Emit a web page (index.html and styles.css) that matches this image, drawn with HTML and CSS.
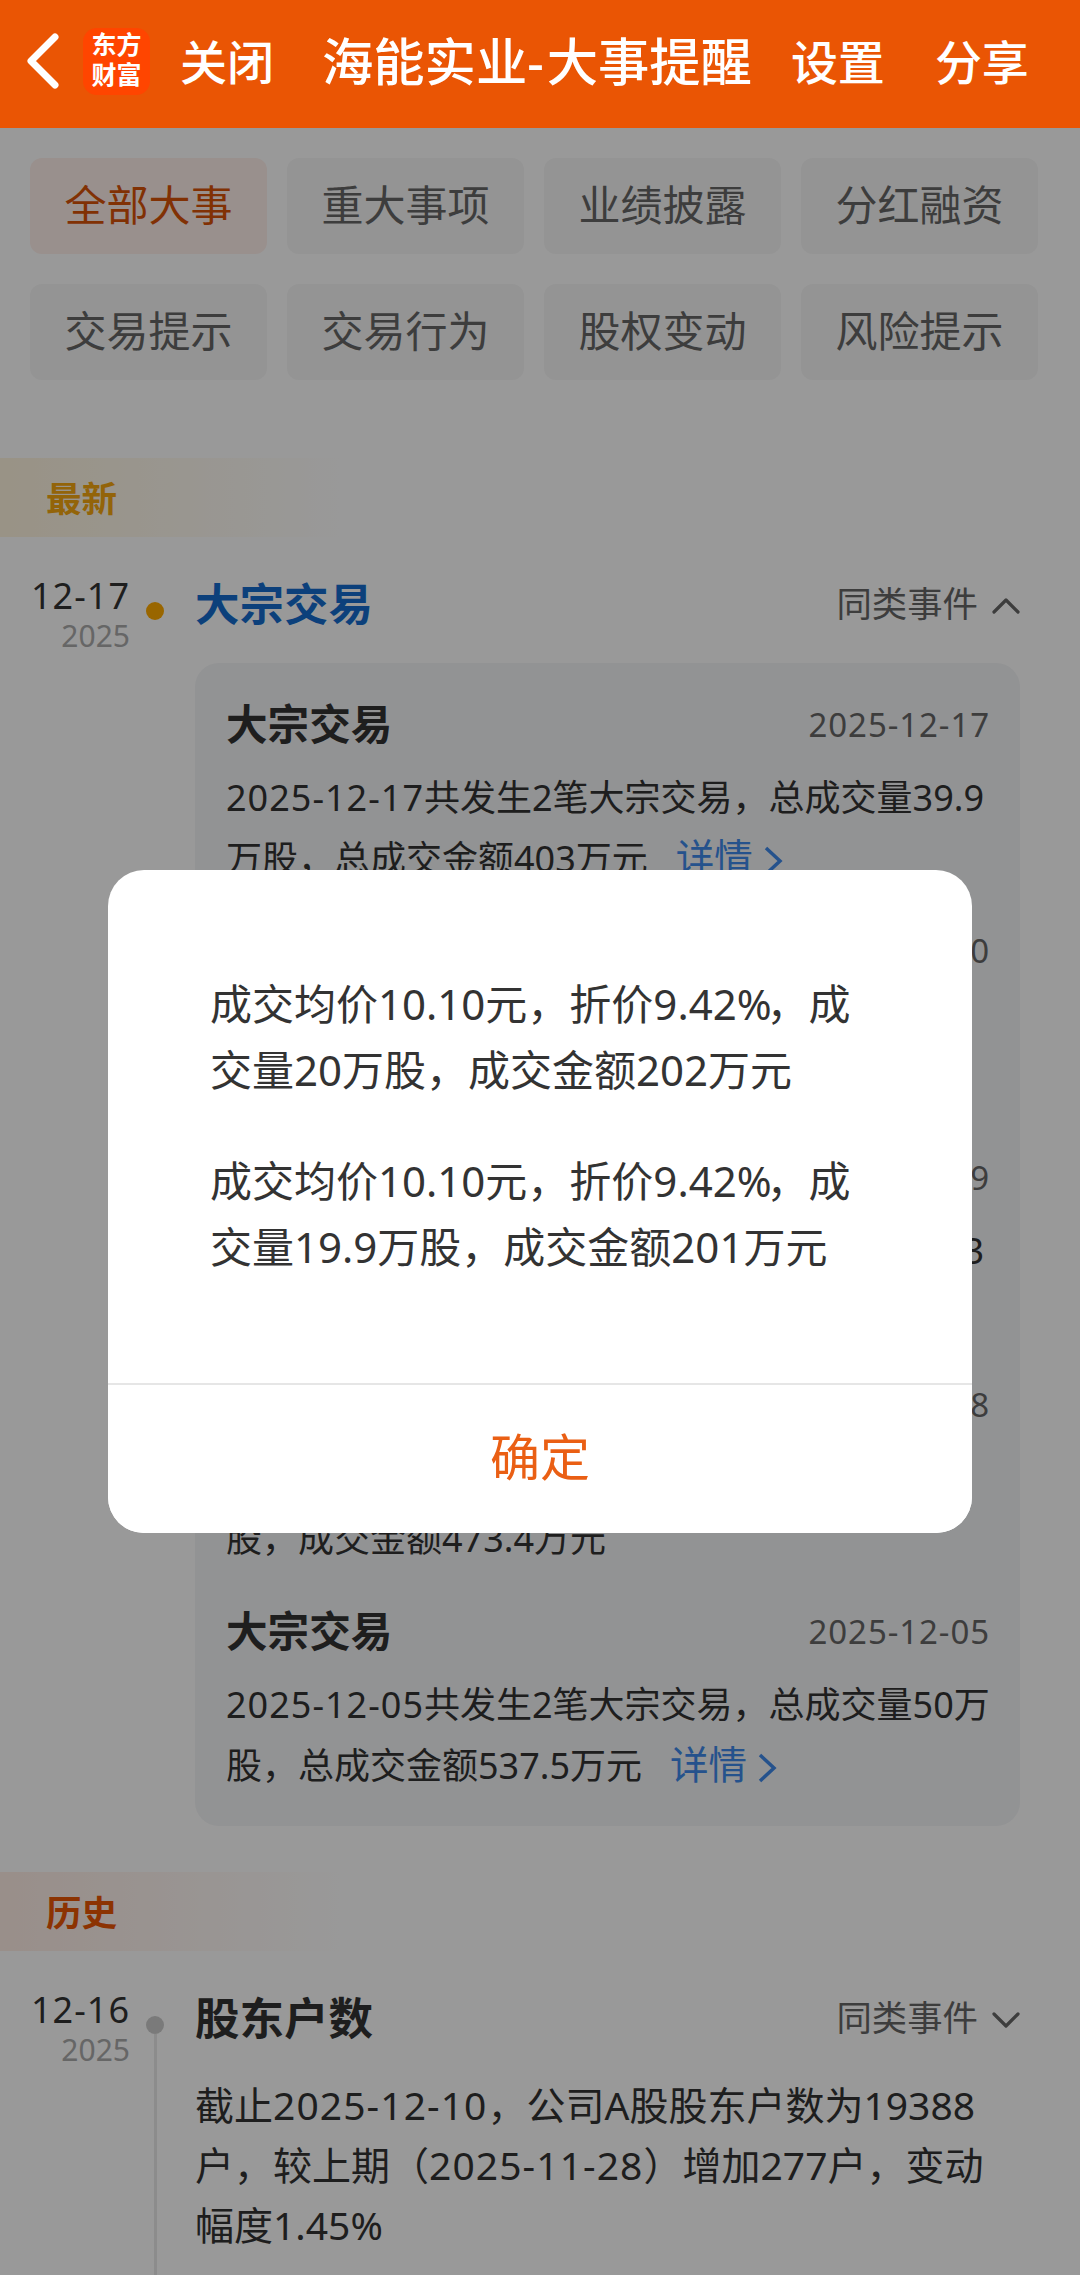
FILE: index.html
```html
<!DOCTYPE html>
<html lang="zh-CN">
<head>
    <meta charset="UTF-8">
    <meta name="viewport" content="width=device-width, initial-scale=1.0">
    <title>海能实业-大事提醒</title>
    <link rel="stylesheet" href="styles.css">
</head>
<body>
    <header class="navbar">
        <svg class="back" width="32" height="56" viewBox="0 0 32 56"><path d="M28 4L4 28L28 52"/></svg>
        <div class="logo"><span>东方</span><span>财富</span></div>
        <a class="nav-link close">关闭</a>
        <h1>海能实业<span class="dash">-</span>大事提醒</h1>
        <a class="nav-link setting">设置</a>
        <a class="nav-link share">分享</a>
    </header>

    <main class="content">
        <nav class="filters">
            <button class="chip active">全部大事</button>
            <button class="chip">重大事项</button>
            <button class="chip">业绩披露</button>
            <button class="chip">分红融资</button>
            <button class="chip">交易提示</button>
            <button class="chip">交易行为</button>
            <button class="chip">股权变动</button>
            <button class="chip">风险提示</button>
        </nav>

        <!-- 最新 -->
        <h2 class="band band-new">最新</h2>
        <section class="event">
            <div class="when"><div class="day">12-17</div><div class="year">2025</div></div>
            <div class="axis"><i class="dot dot-new"></i></div>
            <div class="body">
                <div class="event-head">
                    <h3 class="blue">大宗交易</h3>
                    <a class="similar">同类事件<svg width="28" height="16" viewBox="0 0 28 16"><path d="M2 14L14 2L26 14"/></svg></a>
                </div>
                <div class="card">
                    <div class="item">
                        <div class="item-head"><h4>大宗交易</h4><time>2025-12-17</time></div>
                        <p><span class="d">2025-12-17</span>共发生2笔大宗交易，总成交量39.9万股，总成交金额403万元<a class="detail">详情<svg width="20" height="30" viewBox="0 0 20 30"><path d="M3 2L17 15L3 28"/></svg></a></p>
                    </div>
                    <div class="item">
                        <div class="item-head"><h4>大宗交易</h4><time>2025-12-10</time></div>
                        <p><span class="d">2025-12-10</span>发生1笔大宗交易，成交量20.02万股，成交金额212万元</p>
                    </div>
                    <div class="item">
                        <div class="item-head"><h4>大宗交易</h4><time>2025-12-09</time></div>
                        <p><span class="d">2025-12-09</span>共发生2笔大宗交易，总成交量38.3万股，总成交金额407万元</p>
                    </div>
                    <div class="item">
                        <div class="item-head"><h4>大宗交易</h4><time>2025-12-08</time></div>
                        <p><span class="d">2025-12-08</span>发生1笔大宗交易，成交量44.02万股，成交金额473.4万元</p>
                    </div>
                    <div class="item">
                        <div class="item-head"><h4>大宗交易</h4><time>2025-12-05</time></div>
                        <p><span class="d">2025-12-05</span>共发生2笔大宗交易，总成交量50万股，总成交金额537.5万元<a class="detail">详情<svg width="20" height="30" viewBox="0 0 20 30"><path d="M3 2L17 15L3 28"/></svg></a></p>
                    </div>
                </div>
            </div>
        </section>

        <!-- 历史 -->
        <h2 class="band band-old">历史</h2>
        <section class="event">
            <div class="when"><div class="day">12-16</div><div class="year">2025</div></div>
            <div class="axis"><i class="dot"></i><i class="line"></i></div>
            <div class="body">
                <div class="event-head">
                    <h3>股东户数</h3>
                    <a class="similar">同类事件<svg width="28" height="16" viewBox="0 0 28 16"><path d="M2 2L14 14L26 2"/></svg></a>
                </div>
                <p class="text">截止<span class="d">2025-12-10</span>，公司A股股东户数为19388户，较上期（<span class="d">2025-11-28</span>）增加277户，变动幅度1.45%</p>
            </div>
        </section>

        <div class="mask"></div>
    </main>

    <!-- 弹窗 -->
    <div class="modal">
        <div class="modal-body">
            <p>成交均价10.10元，折价9.42<span class="pct">%</span>，成交量20万股，成交金额202万元</p>
            <p>成交均价10.10元，折价9.42<span class="pct">%</span>，成交量19.9万股，成交金额201万元</p>
        </div>
        <button class="ok">确定</button>
    </div>
</body>
</html>
```
FILE: styles.css
```css
* {
    box-sizing: border-box;
    margin: 0;
    padding: 0;
}

body {
    position: relative;
    display: flex;
    flex-direction: column;
    width: 1080px;
    height: 2275px;
    overflow: hidden;
    background: #fff;
    color: #333;
    font-family: "Noto Sans", "Noto Sans CJK SC", sans-serif;
}

button {
    border: none;
    font-family: inherit;
}

svg {
    fill: none;
    stroke: currentColor;
    stroke-linecap: round;
    stroke-linejoin: round;
}

/* 顶部导航 */
.navbar {
    display: flex;
    align-items: center;
    flex: none;
    height: 128px;
    padding: 0 27px 6px;
    background: #ea5504;
    color: #fff;
    white-space: nowrap;
}

.back {
    stroke-width: 7;
}

.logo {
    display: flex;
    flex-direction: column;
    justify-content: center;
    width: 67px;
    height: 67px;
    margin-left: 24px;
    padding-bottom: 5px;
    border-radius: 14px;
    background: #ff4500;
    font-size: 25px;
    font-weight: 700;
    line-height: 30px;
    text-align: center;
}

.nav-link {
    padding-bottom: 4px;
    font-size: 47px;
    font-weight: 500;
}

.close {
    margin-left: 30px;
}

.navbar h1 {
    margin-left: 48px;
    padding-bottom: 5px;
    font-size: 51.3px;
    font-weight: 500;
}

.dash {
    letter-spacing: 3px;
}

.setting {
    margin-left: 39px;
}

.share {
    margin-left: 50px;
}

/* 筛选 */
.content {
    position: relative;
    flex: 1;
    overflow: hidden;
}

.filters {
    display: grid;
    grid-template-columns: repeat(4, 237px);
    gap: 30px 20px;
    padding: 30px 30px 78px;
}

.chip {
    height: 96px;
    padding-bottom: 8px;
    border-radius: 12px;
    background: #f7f7f7;
    color: #666;
    font-size: 42px;
}

.chip.active {
    background: #fff0eb;
    color: #d85208;
}

/* 时间轴 */
.band {
    width: 340px;
    height: 79px;
    padding-left: 46px;
    font-size: 35.5px;
    line-height: 81px;
}

.band-new {
    background: linear-gradient(to right, #fff5df, #fff);
    color: #f5a70f;
}

.band-old {
    margin-top: 46px;
    background: linear-gradient(to right, #ffeee6, #fff);
    color: #ea5504;
}

.event {
    display: flex;
    padding-top: 33px;
}

.when {
    width: 130px;
    padding-top: 6px;
    line-height: 40px;
    text-align: right;
}

.day {
    font-size: 36px;
    letter-spacing: 0.028em;
}

.year {
    color: #aaa;
    font-size: 30px;
}

.axis {
    display: flex;
    flex-direction: column;
    align-items: center;
    width: 18px;
    margin-left: 16px;
    padding-top: 32px;
}

.dot {
    width: 18px;
    height: 18px;
    border-radius: 50%;
    background: #ccc;
}

.dot-new {
    background: #ffaa00;
}

.line {
    width: 3px;
    height: 300px;
    background: #eaeaea;
}

.body {
    width: 825px;
    margin-left: 31px;
}

.event-head {
    display: flex;
    justify-content: space-between;
    align-items: center;
    height: 70px;
}

.event-head h3 {
    font-size: 44.5px;
    line-height: 68px;
    padding-bottom: 2px;
}

.event-head .blue {
    color: #146bcd;
}

.similar {
    display: flex;
    align-items: center;
    gap: 14px;
    color: #666;
    font-size: 35.4px;
    line-height: 66px;
    padding-bottom: 4px;
}

.similar svg {
    margin-top: 6px;
    stroke-width: 3.2;
}

.card {
    margin-top: 23px;
    padding: 30px 30px 30px 31px;
    border-radius: 24px;
    background: #f4f5f7;
}

.item + .item {
    margin-top: 31.3px;
}

.item-head {
    display: flex;
    justify-content: space-between;
    align-items: center;
    height: 62px;
    margin-bottom: 11.5px;
}

.item-head h4 {
    font-size: 41.6px;
    line-height: 60px;
}

.item-head time {
    color: #666;
    font-size: 33px;
    letter-spacing: 0.028em;
}

.item p {
    height: 122px;
    font-size: 36px;
    line-height: 61px;
    word-break: break-all;
}

.d {
    letter-spacing: 0.028em;
}

.detail {
    margin-left: 28px;
    color: #3e89ea;
    font-size: 38.5px;
    line-height: 50px;
}

.detail svg {
    margin-left: 10px;
    vertical-align: -4px;
    stroke-width: 3.5;
    stroke-linecap: butt;
    stroke-linejoin: miter;
}

.text {
    margin: 21px 32px 0 0;
    font-size: 39px;
    line-height: 60px;
    word-break: break-all;
}

.mask {
    position: absolute;
    inset: 0;
    background: rgba(0, 0, 0, 0.4);
}

/* 弹窗 */
.modal {
    position: absolute;
    top: 870px;
    left: 108px;
    display: flex;
    flex-direction: column;
    width: 864px;
    height: 663px;
    border-radius: 36px;
    background: #fff;
    overflow: hidden;
}

.modal-body {
    flex: 1;
    padding: 101px 102px 0;
    font-size: 42px;
    line-height: 66px;
    word-break: break-all;
}

.modal-body p + p {
    margin-top: 45px;
}

.pct {
    letter-spacing: -5px;
}

.ok {
    height: 150px;
    padding-bottom: 9px;
    border-top: 2px solid #e6e6e6;
    background: #fff;
    color: #ea5f14;
    font-size: 50px;
}
```
